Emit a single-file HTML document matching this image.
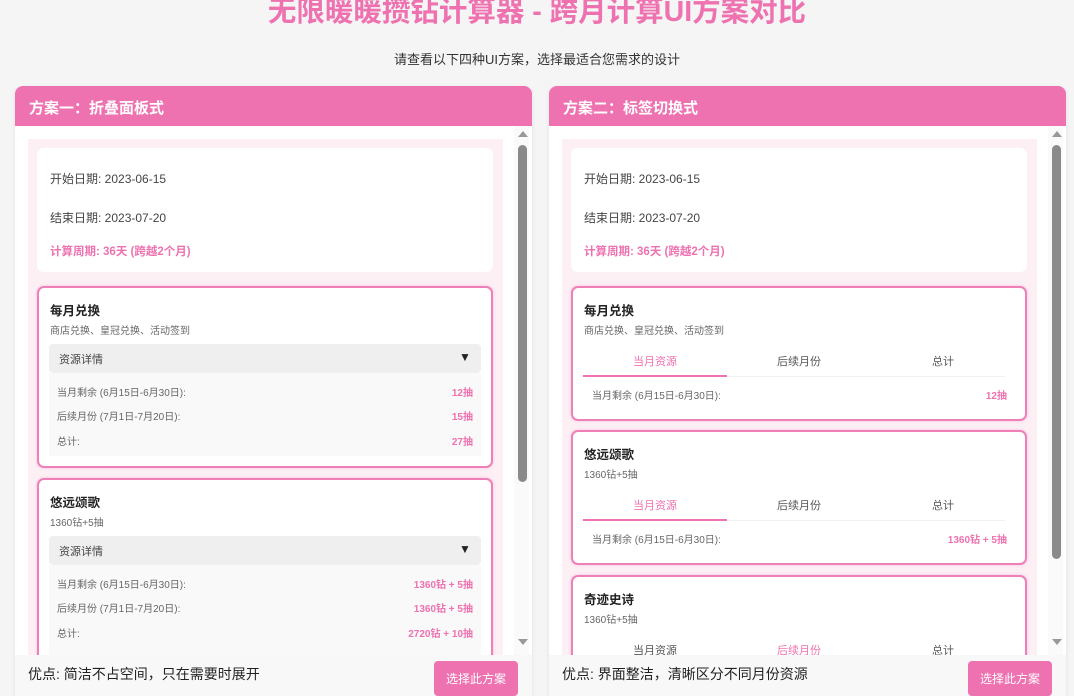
<!DOCTYPE html>
<html><head><meta charset="utf-8"><style>
*{box-sizing:border-box;margin:0;padding:0}
body{width:1074px;height:690px;overflow:hidden;background:#f5f5f5;font-family:"Liberation Sans","Noto Sans CJK SC",sans-serif;color:#333;position:relative}
.a{position:absolute;white-space:nowrap}
.title{left:0;width:1074px;text-align:center;top:-11px;font-size:28.5px;font-weight:bold;color:#ee72b0}
.sub{left:0;width:1074px;text-align:center;top:49px;font-size:13px;color:#333}
.panel{position:absolute;top:86px;width:517px;height:610px;background:#fff;border-radius:8px 8px 0 0;overflow:hidden;box-shadow:0 1px 4px rgba(0,0,0,.08)}
.hd{position:absolute;left:0;top:0;width:100%;height:40px;background:#ee72b0;color:#fff;font-weight:bold;font-size:15px;padding:11px 0 0 14px}
.inner{position:absolute;left:13px;top:53px;width:475px;height:520px;background:#fdf0f5}
.sb{position:absolute;left:499px;top:40px;width:15px;height:529px;background:#fafafa}
.thumb{position:absolute;left:503px;width:9px;background:#8a8a8a;border-radius:5px}
.up,.dn{position:absolute;left:503px;width:0;height:0;border-left:5px solid transparent;border-right:5px solid transparent}
.up{top:45px;border-bottom:6px solid #999}.dn{top:553px;border-top:6px solid #999}
.card{position:absolute;left:22px;width:456px;background:#fff;border-radius:7px}
.pc{border:2px solid #ef7fb8;box-shadow:0 0 3px rgba(238,114,176,.35)}
.t{position:absolute;font-size:12px;white-space:nowrap;color:#444}
.b{font-weight:bold;font-size:12.5px;color:#222}
.g{font-size:10px;color:#666}
.pk{color:#ee72b0;font-weight:bold}
.dh{position:absolute;left:10px;width:432px;height:29px;background:#efefef;border-radius:4px}
.db{position:absolute;left:10px;width:432px;background:#f9f9f9}
.ft{position:absolute;left:0;top:569px;width:100%;height:41px;background:#f8f8f8}
.btn{position:absolute;left:419px;top:575px;width:84px;height:35px;background:#ee72b0;color:#fff;font-size:12px;border-radius:4px;text-align:center;padding-top:9px}
.tabu{position:absolute;height:2px;background:#ee72b0}
.tabl{position:absolute;height:1px;background:#f0f0f0}
</style></head><body>
<div class="a title">无限暖暖攒钻计算器 - 跨月计算UI方案对比</div>
<div class="a sub">请查看以下四种UI方案，选择最适合您需求的设计</div>

<div class="panel" style="left:15px">
<div class="hd">方案一：折叠面板式</div>
<div class="inner"></div>
<div class="card" style="top:62px;height:124px">
 <div class="t" style="left:13px;top:22px">开始日期: 2023-06-15</div>
 <div class="t" style="left:13px;top:61px">结束日期: 2023-07-20</div>
 <div class="t pk" style="left:13px;top:95px;font-size:11.5px">计算周期: 36天 (跨越2个月)</div>
</div>
<div class="card pc" style="top:200px;height:182px">
 <div class="t b" style="left:11px;top:12px">每月兑换</div>
 <div class="t g" style="left:11px;top:34px">商店兑换、皇冠兑换、活动签到</div>
 <div class="dh" style="top:56px"><div class="t" style="left:10px;top:7px;font-size:11px">资源详情</div><div class="t" style="left:410px;top:6px;font-size:12px;color:#222">▼</div></div>
 <div class="db" style="top:85px;height:83px">
  <div class="t g" style="left:8px;top:11px">当月剩余 (6月15日-6月30日):</div><div class="t pk" style="right:8px;top:11px;font-size:10px">12抽</div>
  <div class="t g" style="left:8px;top:35px">后续月份 (7月1日-7月20日):</div><div class="t pk" style="right:8px;top:35px;font-size:10px">15抽</div>
  <div class="t g" style="left:8px;top:60px">总计:</div><div class="t pk" style="right:8px;top:60px;font-size:10px">27抽</div>
 </div>
</div>
<div class="card pc" style="top:392px;height:200px">
 <div class="t b" style="left:11px;top:12px">悠远颂歌</div>
 <div class="t g" style="left:11px;top:34px">1360钻+5抽</div>
 <div class="dh" style="top:56px"><div class="t" style="left:10px;top:7px;font-size:11px">资源详情</div><div class="t" style="left:410px;top:6px;font-size:12px;color:#222">▼</div></div>
 <div class="db" style="top:85px;height:90px">
  <div class="t g" style="left:8px;top:11px">当月剩余 (6月15日-6月30日):</div><div class="t pk" style="right:8px;top:11px;font-size:10px">1360钻 + 5抽</div>
  <div class="t g" style="left:8px;top:35px">后续月份 (7月1日-7月20日):</div><div class="t pk" style="right:8px;top:35px;font-size:10px">1360钻 + 5抽</div>
  <div class="t g" style="left:8px;top:60px">总计:</div><div class="t pk" style="right:8px;top:60px;font-size:10px">2720钻 + 10抽</div>
 </div>
</div>
<div class="sb"></div><div class="thumb" style="top:59px;height:337px"></div><div class="up"></div><div class="dn"></div>
<div class="ft"><div class="t" style="left:13px;top:9px;font-size:14px;color:#222">优点: 简洁不占空间，只在需要时展开</div></div>
<div class="btn">选择此方案</div>
</div>

<div class="panel" style="left:549px">
<div class="hd">方案二：标签切换式</div>
<div class="inner"></div>
<div class="card" style="top:62px;height:124px">
 <div class="t" style="left:13px;top:22px">开始日期: 2023-06-15</div>
 <div class="t" style="left:13px;top:61px">结束日期: 2023-07-20</div>
 <div class="t pk" style="left:13px;top:95px;font-size:11.5px">计算周期: 36天 (跨越2个月)</div>
</div>
<div class="card pc" style="top:200px;height:135px">
 <div class="t b" style="left:11px;top:12px">每月兑换</div>
 <div class="t g" style="left:11px;top:34px">商店兑换、皇冠兑换、活动签到</div>
 <div class="t" style="left:60px;top:65px;font-size:11px;color:#ee72b0">当月资源</div>
 <div class="t" style="left:204px;top:65px;font-size:11px;color:#555">后续月份</div>
 <div class="t" style="left:359px;top:65px;font-size:11px;color:#555">总计</div>
 <div class="tabl" style="left:10px;top:88px;width:422px"></div>
 <div class="tabu" style="left:10px;top:87px;width:144px"></div>
 <div class="t g" style="left:19px;top:99px">当月剩余 (6月15日-6月30日):</div><div class="t pk" style="right:18px;top:99px;font-size:10px">12抽</div>
</div>
<div class="card pc" style="top:344px;height:135px">
 <div class="t b" style="left:11px;top:12px">悠远颂歌</div>
 <div class="t g" style="left:11px;top:34px">1360钻+5抽</div>
 <div class="t" style="left:60px;top:65px;font-size:11px;color:#ee72b0">当月资源</div>
 <div class="t" style="left:204px;top:65px;font-size:11px;color:#555">后续月份</div>
 <div class="t" style="left:359px;top:65px;font-size:11px;color:#555">总计</div>
 <div class="tabl" style="left:10px;top:88px;width:422px"></div>
 <div class="tabu" style="left:10px;top:87px;width:144px"></div>
 <div class="t g" style="left:19px;top:99px">当月剩余 (6月15日-6月30日):</div><div class="t pk" style="right:18px;top:99px;font-size:10px">1360钻 + 5抽</div>
</div>
<div class="card pc" style="top:489px;height:135px">
 <div class="t b" style="left:11px;top:12px">奇迹史诗</div>
 <div class="t g" style="left:11px;top:34px">1360钻+5抽</div>
 <div class="t" style="left:60px;top:65px;font-size:11px;color:#555">当月资源</div>
 <div class="t" style="left:204px;top:65px;font-size:11px;color:#ee72b0">后续月份</div>
 <div class="t" style="left:359px;top:65px;font-size:11px;color:#555">总计</div>
</div>
<div class="sb"></div><div class="thumb" style="top:59px;height:414px"></div><div class="up"></div><div class="dn"></div>
<div class="ft"><div class="t" style="left:13px;top:9px;font-size:14px;color:#222">优点: 界面整洁，清晰区分不同月份资源</div></div>
<div class="btn">选择此方案</div>
</div>
</body></html>
